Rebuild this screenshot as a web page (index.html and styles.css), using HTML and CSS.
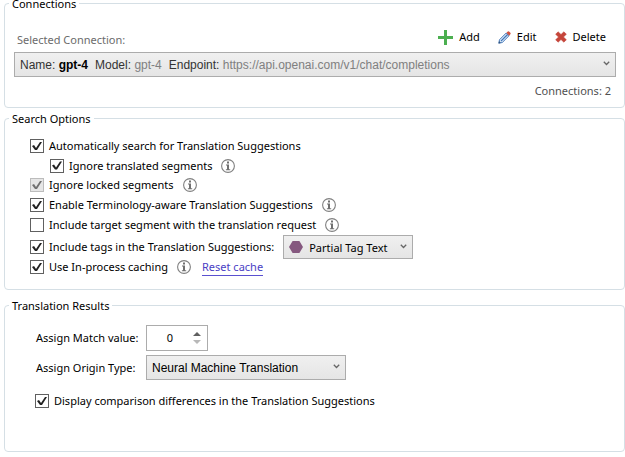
FILE: index.html
```html
<!DOCTYPE html>
<html lang="en">

<head>
  <meta charset="UTF-8">
  <meta name="viewport" content="width=device-width, initial-scale=1.0">
  <title>Translation Provider Settings</title>
  <link rel="stylesheet" href="styles.css">
</head>

<body>

  <!-- shared icons -->
  <svg class="sprite" aria-hidden="true">
    <symbol id="info" viewBox="0 0 14 14">
      <circle cx="7" cy="7" r="6.4" fill="none" stroke="#808080" stroke-width="1.1" />
      <path d="M6 2.6h2v1.8H6zM5 5.4h3v4.8h1.2v1H4.9v-1H6V6.4H5z" fill="#707070" />
    </symbol>
    <symbol id="arrow" viewBox="0 0 7 5">
      <path d="M0.8 0.8L3.5 3.5L6.2 0.8" fill="none" stroke="#666" stroke-width="1.3" />
    </symbol>
  </svg>

  <form class="settings">

    <fieldset class="group connections">
      <legend>Connections</legend>

      <div class="connections-header">
        <label class="muted" for="connection">Selected Connection:</label>
        <div class="actions">
          <button type="button" class="action">
            <svg width="15" height="15" viewBox="0 0 15 15"><path d="M6 0h3v6h6v3H9v6H6V9H0V6h6z" fill="#4caf50" /></svg>
            Add
          </button>
          <button type="button" class="action">
            <svg width="13" height="13" viewBox="0 0 14 14">
              <path d="M1.6 9.4L8.8 2.2L11.8 5.2L4.6 12.4L0.9 13.1z" fill="#d9e8f7" stroke="#3f74b8" stroke-width="1" />
              <path d="M3.2 10.9L10.3 3.8" stroke="#3f74b8" stroke-width="1.3" />
              <path d="M0.5 13.5L1.2 10.9L3.1 12.8z" fill="#35557c" />
              <path d="M9 2L10.6 0.5Q11.4 0 12.2 0.7L13.3 1.8Q14 2.6 13.3 3.4L12 5z" fill="#d0513f" />
            </svg>
            Edit
          </button>
          <button type="button" class="action">
            <svg width="12" height="12" viewBox="0 0 13 12"><path d="M3.4 0.4L6.5 3.3L9.6 0.4L12.3 3L9.2 6L12.3 9L9.6 11.6L6.5 8.7L3.4 11.6L0.7 9L3.8 6L0.7 3z" fill="#c5453a" stroke="#c5453a" stroke-width="0.6" /></svg>
            Delete
          </button>
        </div>
      </div>

      <div class="dropdown dropdown-connection">
        <select id="connection">
          <option>Name: gpt-4 Model: gpt-4 Endpoint: https://api.openai.com/v1/chat/completions</option>
        </select>
        <div class="connection-text" aria-hidden="true">
          <span>Name: <b>gpt-4</b></span>
          <span>Model: <i>gpt-4</i></span>
          <span>Endpoint: <i>https://api.openai.com/v1/chat/completions</i></span>
        </div>
        <svg class="arrow"><use href="#arrow" /></svg>
      </div>

      <div class="count">Connections: 2</div>
    </fieldset>

    <fieldset class="group search">
      <legend>Search Options</legend>

      <div class="row">
        <input id="auto" type="checkbox" checked>
        <label for="auto">Automatically search for Translation Suggestions</label>
      </div>
      <div class="row row-nested">
        <input id="translated" type="checkbox" checked>
        <label for="translated">Ignore translated segments</label>
        <svg class="info"><use href="#info" /></svg>
      </div>
      <div class="row">
        <input id="locked" type="checkbox" checked disabled>
        <label for="locked">Ignore locked segments</label>
        <svg class="info"><use href="#info" /></svg>
      </div>
      <div class="row">
        <input id="terminology" type="checkbox" checked>
        <label for="terminology">Enable Terminology-aware Translation Suggestions</label>
        <svg class="info"><use href="#info" /></svg>
      </div>
      <div class="row">
        <input id="target" type="checkbox">
        <label for="target">Include target segment with the translation request</label>
        <svg class="info"><use href="#info" /></svg>
      </div>
      <div class="row row-tags">
        <input id="tags" type="checkbox" checked>
        <label for="tags">Include tags in the Translation Suggestions:</label>
        <div class="dropdown dropdown-tags">
          <select aria-label="Tag text">
            <option>Partial Tag Text</option>
            <option>Full Tag Text</option>
          </select>
          <svg class="hexagon" viewBox="0 0 14 12"><path d="M3.6 0h6.8L14 6l-3.6 6H3.6L0 6z" fill="#85587f" /></svg>
          <svg class="arrow"><use href="#arrow" /></svg>
        </div>
      </div>
      <div class="row">
        <input id="caching" type="checkbox" checked>
        <label for="caching">Use In-process caching</label>
        <svg class="info"><use href="#info" /></svg>
        <a class="reset" href="#">Reset cache</a>
      </div>
    </fieldset>

    <fieldset class="group results">
      <legend>Translation Results</legend>

      <div class="fields">
        <label for="match">Assign Match value:</label>
        <div class="spinner">
          <input id="match" type="number" value="0" min="0" max="100">
          <svg width="8" height="12" viewBox="0 0 8 12">
            <path d="M0 4L4 0L8 4z" fill="#606060" />
            <path d="M0 8h8L4 12z" fill="#b8b8b8" />
          </svg>
        </div>
        <label for="origin">Assign Origin Type:</label>
        <div class="dropdown dropdown-origin">
          <select id="origin">
            <option>Neural Machine Translation</option>
          </select>
          <svg class="arrow"><use href="#arrow" /></svg>
        </div>
      </div>

      <div class="row">
        <input id="compare" type="checkbox" checked>
        <label for="compare">Display comparison differences in the Translation Suggestions</label>
      </div>
    </fieldset>

  </form>

</body>

</html>
```
FILE: styles.css
```css
* {
  box-sizing: border-box;
}

body {
  margin: 0;
  background: #fff;
  color: #000;
  font-family: "Noto Sans", "Open Sans", sans-serif;
  font-size: 11px;
  line-height: 16px;
}

.sprite {
  position: absolute;
  width: 0;
  height: 0;
}

.settings {
  margin-top: -5px;
  padding-left: 4px;
}

.group {
  min-width: 0;
  margin: 0 0 2px;
  border: 1px solid #d5dfe5;
  border-radius: 4px;
}

legend {
  height: 16px;
  padding: 1px 3px 0;
}

/* Connections */

.connections {
  padding: 16px 8px 8px 9px;
}

.connections legend {
  margin-left: -5px;
}

.connections-header {
  display: flex;
  justify-content: space-between;
  align-items: flex-end;
  height: 25px;
  padding: 0 10px 4px 3px;
}

.muted {
  color: #6b6b6b;
}

.actions {
  display: flex;
  gap: 18px;
  padding-bottom: 3px;
}

.action {
  display: flex;
  align-items: center;
  gap: 6px;
  padding: 0;
  border: none;
  background: none;
  color: #000;
  font: inherit;
  cursor: pointer;
}

.count {
  margin-top: 6px;
  padding-right: 5px;
  color: #505050;
  text-align: right;
}

/* Drop-downs */

.dropdown {
  position: relative;
}

.dropdown select {
  appearance: none;
  display: block;
  width: 100%;
  height: 25px;
  padding: 0 20px 0 5px;
  border: 1px solid #acacac;
  border-radius: 0;
  background: linear-gradient(#f0f0f0, #e5e5e5);
  color: #000;
  font-family: "Liberation Sans", Arial, sans-serif;
  font-size: 12px;
}

.arrow {
  position: absolute;
  top: 9px;
  right: 6px;
  width: 7px;
  height: 5px;
  pointer-events: none;
}

.dropdown-connection select {
  color: transparent;
}

.connection-text {
  position: absolute;
  inset: 0 20px 0 6px;
  display: flex;
  align-items: center;
  gap: 7px;
  overflow: hidden;
  color: #333;
  font-family: "Liberation Sans", Arial, sans-serif;
  font-size: 12px;
  white-space: nowrap;
  pointer-events: none;
}

.connection-text b {
  color: #000;
}

.connection-text i {
  color: #808080;
  font-style: normal;
}

.dropdown-tags {
  width: 130px;
}

.dropdown-tags select {
  height: 24px;
  padding-left: 25px;
  font-family: inherit;
  font-size: 11px;
}

.hexagon {
  position: absolute;
  top: 6px;
  left: 6px;
  width: 14px;
  height: 12px;
  pointer-events: none;
}

/* Check box rows */

.search {
  margin-bottom: 7px;
  padding: 10px 8px 12px 25px;
}

.search legend {
  margin-left: -21px;
}

.row {
  display: flex;
  align-items: center;
  gap: 6px;
  height: 20px;
}

.row label {
  margin-right: 3px;
}

.row-nested {
  height: 19px;
  padding-left: 20px;
}

.row-tags {
  height: 24px;
  margin-bottom: -2px;
}

input[type="checkbox"] {
  appearance: none;
  flex: none;
  width: 14px;
  height: 14px;
  margin: 0 -1px 0 0;
  border: 1px solid #606060;
  background: #fff;
}

input[type="checkbox"]:checked::after {
  content: "";
  display: block;
  width: 12px;
  height: 12px;
  background: #212121;
  clip-path: polygon(1px 6px, 3px 5px, 5px 8px, 9px 2px, 11px 2px, 6px 10px, 4px 10px);
}

input[type="checkbox"]:disabled {
  border-color: #bcbcbc;
  background: #e6e6e6;
}

input[type="checkbox"]:disabled::after {
  background: #707070;
}

.info {
  flex: none;
  width: 14px;
  height: 14px;
}

.reset {
  margin-left: 5px;
  border-bottom: 1px solid #5a50d0;
  color: #4a40c4;
  text-decoration: none;
}

/* Translation Results */

.results {
  padding: 12px 8px 40px 30px;
}

.results legend {
  margin-left: -26px;
}

.fields {
  display: grid;
  grid-template-columns: 110px 1fr;
  align-items: center;
  row-gap: 4px;
  margin-bottom: 11px;
  padding-left: 1px;
}

.spinner {
  display: flex;
  align-items: center;
  width: 62px;
  height: 26px;
  padding-right: 6px;
  border: 1px solid #acacac;
}

.spinner input {
  appearance: textfield;
  flex: 1;
  min-width: 0;
  padding: 0;
  border: none;
  outline: none;
  background: none;
  color: #000;
  font: inherit;
  text-align: center;
}

.spinner input::-webkit-inner-spin-button {
  display: none;
}

.dropdown-origin {
  width: 200px;
}
```
